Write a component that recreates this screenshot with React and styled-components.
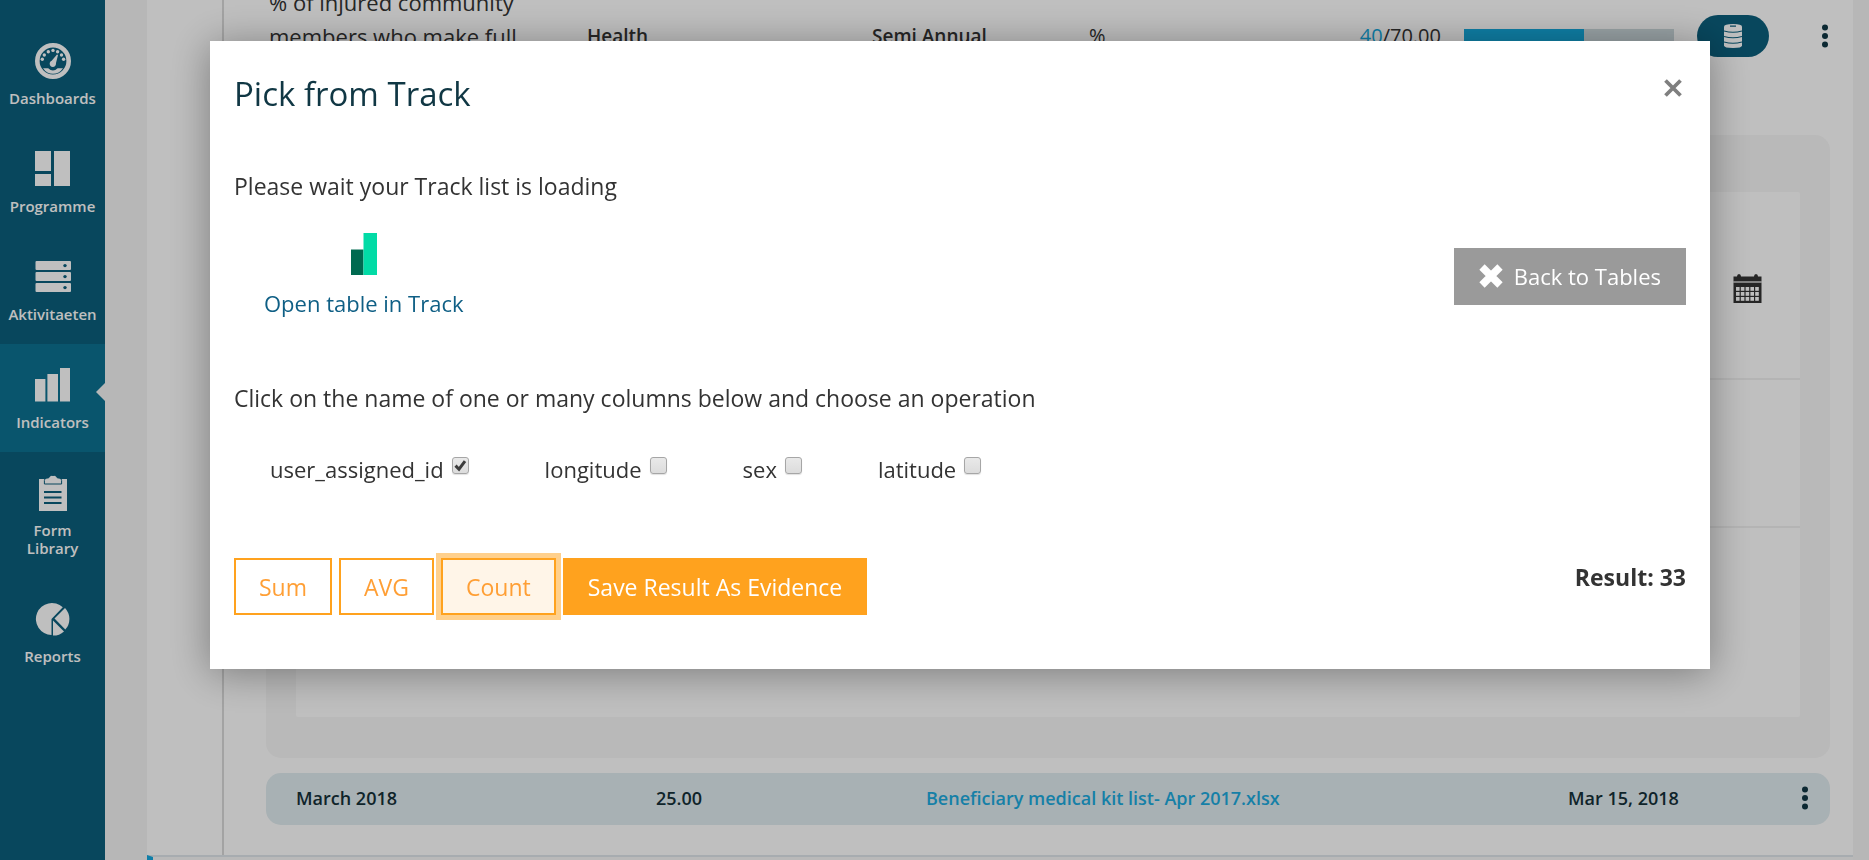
import React, { useState } from 'react';
import styled, { createGlobalStyle, css } from 'styled-components';

const GlobalStyle = createGlobalStyle`
  *, *::before, *::after { box-sizing: border-box; }
  body {
    margin: 0;
    background: #f4f4f4;
    color: #333;
    font-family: "Segoe UI", "Open Sans", "Noto Sans", sans-serif;
    font-size: 23px;
    line-height: 32px;
  }
  button { font: inherit; cursor: pointer; }
  a { text-decoration: none; }
  svg { display: block; }
`;

/* ---------- page ---------- */

const Page = styled.div`
  display: flex;
  min-height: 100vh;
`;

const Sidebar = styled.nav`
  flex: none;
  width: 105px;
  background: #0b5f7d;
  padding-top: 20px;
`;

const NavItem = styled.a`
  position: relative;
  display: flex;
  flex-direction: column;
  align-items: center;
  gap: 10px;
  padding: 23px 0 21px;
  color: #fff;
  font-size: 15px;
  font-weight: 600;
  line-height: 18px;
  text-align: center;

  ${({ $active }) =>
    $active &&
    css`
      background: #0d7292;
      &::after {
        content: '';
        position: absolute;
        right: 0;
        top: 39px;
        border: 9px solid transparent;
        border-left: 0;
        border-right-color: #f4f4f4;
      }
    `}
`;

const NavLabel = styled.span`
  max-width: 96px;
  white-space: pre-line;
`;

const Content = styled.main`
  flex: 1;
  min-width: 0;
  display: flex;
  flex-direction: column;
  padding: 0 16px 0 42px;
`;

const IndicatorBlock = styled.section`
  display: flex;
  background: #fff;
`;

const Rail = styled.div`
  flex: none;
  width: 77px;
  border-right: 2px solid #dadada;
`;

const IndicatorBody = styled.div`
  flex: 1;
  min-width: 0;
  padding: 0 23px 30px 42px;
`;

const IndicatorRow = styled.div`
  display: grid;
  grid-template-columns: 318fr 285fr 217fr 100fr 252fr 256px 100px 56px;
  align-items: center;
  align-content: center;
  height: 72px;
  margin: 0 -23px 0 3px;
  overflow: hidden;
  font-size: 20px;
`;

const Description = styled.div`
  max-width: 270px;
  padding-bottom: 34px;
  font-size: 22px;
  line-height: 34px;
`;

const Strong = styled.div`
  font-size: 19px;
  font-weight: 600;
`;

const Value = styled.div`
  text-align: right;

  span { color: #14a9e0; }
`;

const ProgressTrack = styled.div`
  height: 14px;
  margin: 0 23px;
  background: #ccd9dd;
`;

const ProgressFill = styled.div`
  height: 100%;
  background: #14a9dc;
`;

const PillButton = styled.button`
  display: flex;
  align-items: center;
  justify-content: center;
  width: 72px;
  height: 42px;
  padding: 0;
  border: 0;
  border-radius: 21px;
  background: #0b5f7d;
  color: #fff;
`;

const MenuButton = styled.button`
  display: flex;
  justify-content: center;
  width: 20px;
  padding: 0;
  border: 0;
  background: none;
  color: #103744;
`;

const MenuCell = styled.div`
  display: flex;
  justify-content: center;
`;

const PeriodPanel = styled.div`
  margin-top: 63px;
  padding: 57px 30px 41px;
  border-radius: 15px;
  background: #f7f7f7;
`;

const PeriodForm = styled.div`
  border-radius: 2px;
  background: #fff;
`;

const FormSection = styled.div`
  display: flex;
  align-items: center;
  justify-content: flex-end;
  height: ${({ $height }) => $height}px;
  padding: 6px 38px 0;

  & + & { border-top: 2px solid #f1f1f1; }
`;

const PlainButton = styled.button`
  padding: 0;
  border: 0;
  background: none;
  color: ${({ $color }) => $color};
`;

const PeriodRow = styled.div`
  display: grid;
  grid-template-columns: 360fr 270fr 642fr 227fr 20px;
  align-items: center;
  height: 52px;
  margin-top: 15px;
  padding: 0 15px 2px 30px;
  border-radius: 15px;
  background: #e1ecf0;
  color: #153139;
  font-size: 18px;
  font-weight: 600;
`;

const FileLink = styled.a`
  color: #1cabdf;
`;

const NextBlock = styled.section`
  flex: 1;
  min-height: 5px;
  border-top: 2px solid #dfe6eb;
  border-left: 6px solid #14a9e0;
  background: #f7f7f7;
`;

/* ---------- dialog ---------- */

const Overlay = styled.div`
  position: fixed;
  inset: 0;
  padding: 41px 159px 0 210px;
  background: rgba(0, 0, 0, 0.25);
`;

const Dialog = styled.div`
  padding: 31px 24px 54px;
  background: #fff;
  box-shadow: 0 4px 38px rgba(0, 0, 0, 0.36);
`;

const DialogHeader = styled.header`
  display: flex;
  align-items: flex-start;
  justify-content: space-between;
`;

const Title = styled.h2`
  margin: 0;
  color: #103744;
  font-size: 33px;
  font-weight: 400;
  line-height: 44px;
`;

const CloseButton = styled.button`
  margin: 6px 3px 0 0;
  padding: 0;
  border: 0;
  background: none;
  color: #7f7f7f;
`;

const Text = styled.p`
  margin: ${({ $top }) => $top}px 0 0;
`;

const TableRow = styled.div`
  display: flex;
  align-items: center;
  justify-content: space-between;
  margin-top: 31px;
  font-size: 22px;
`;

const TrackLink = styled.a`
  display: flex;
  flex-direction: column;
  align-items: center;
  gap: 12px;
  padding-left: 30px;
  color: #0f5f85;
`;

const Columns = styled.div`
  display: flex;
  flex-wrap: wrap;
  gap: 12px 76px;
  margin-top: 39px;
  padding-left: 36px;
  font-size: 22px;
`;

const ColumnOption = styled.label`
  display: flex;
  gap: 8px;
`;

const CheckWrap = styled.span`
  display: grid;
  width: 17px;
  height: 17px;
  margin-top: 4px;

  & > * { grid-area: 1 / 1; }
`;

const Checkbox = styled.input`
  appearance: none;
  width: 17px;
  height: 17px;
  margin: 0;
  border: 1px solid #a6a6a6;
  border-radius: 3px;
  background: linear-gradient(#e9e9e9, #dcdcdc);
  box-shadow: 0 1px 1px rgba(0, 0, 0, 0.12);
`;

const Actions = styled.div`
  display: flex;
  align-items: flex-start;
  gap: 7px;
  margin-top: 73px;
`;

const Button = styled.button`
  display: flex;
  align-items: center;
  gap: 11px;
  height: 57px;
  padding: 0 23px;
  border: 2px solid #ffa21e;
  background: #fff;
  color: #ff9f35;

  ${({ $kind }) =>
    $kind === 'selected' &&
    css`
      background: #fff5e8;
      box-shadow: 0 0 0 5px #ffd08c;
    `}
  ${({ $kind }) =>
    $kind === 'primary' &&
    css`
      background: #ffa21e;
      color: #fff;
    `}
  ${({ $kind }) =>
    $kind === 'muted' &&
    css`
      border-color: #9a9a9a;
      background: #9a9a9a;
      color: #fff;
    `}
`;

const Result = styled.strong`
  margin-left: auto;
  line-height: 38px;
`;

/* ---------- icons ---------- */

const NavIcon = ({ children }) => (
  <svg width="36" height="36" viewBox="0 0 36 36" fill="currentColor" aria-hidden="true">
    {children}
  </svg>
);

const GaugeIcon = () => (
  <NavIcon>
    <circle cx="18" cy="18" r="15.7" fill="none" stroke="currentColor" strokeWidth="4.6" />
    {[[7.3, 16.3], [9.3, 12], [13.3, 8.8], [18, 7.4], [22.6, 8.8], [26.5, 12], [28.6, 16.3]].map(([x, y]) => (
      <circle key={x} cx={x} cy={y} r="1.7" />
    ))}
    <circle cx="17.8" cy="20.8" r="3.1" />
    <path d="M15.6 19 22 11.6 23 12 20.6 21.6Z" />
    <path d="M8 25.2h5.2q4.8 4.4 9.4 0H28q-3.8 5.6-10 5.6T8 25.2Z" />
  </NavIcon>
);

const BoardIcon = () => (
  <NavIcon>
    <path d="M0 0h16v20H0zM0 23h16v12H0zM19 0h16v35H19z" />
  </NavIcon>
);

const ServerIcon = () => (
  <NavIcon>
    {[2, 13, 24].map((y) => (
      <React.Fragment key={y}>
        <rect x="0.5" y={y} width="35.5" height="9" rx="1" />
        <circle cx="30" cy={y + 4.6} r="1.7" fill="#0b5f7d" />
      </React.Fragment>
    ))}
  </NavIcon>
);

const BarsIcon = () => (
  <NavIcon>
    <path d="M0 12h10.4v22.6H0zM12.4 7H23v27.6H12.4zM25 1h10v33.6H25z" />
  </NavIcon>
);

const ClipboardIcon = () => (
  <NavIcon>
    <path d="M4 4h28v32H4z" />
    <path
      d="M9.4 9V5.5Q9.4 3 12 3h1.5Q14.5.4 16.5.4h3Q21.5.4 22.5 3H24q2.6 0 2.6 2.5V9Z"
      stroke="#0b5f7d"
      strokeWidth="1"
    />
    <path d="M9 17h17.5M9 22.5h17.5M9 28h17.5" stroke="#0b5f7d" strokeWidth="2.2" />
  </NavIcon>
);

const PieIcon = () => (
  <NavIcon>
    <path d="M16.5 18V34A16 16 0 1 1 27.8 6.3Z" />
    <path d="M19.5 17.6 30 6.900A16 16 0 0 1 30.3 28.6Z" />
    <path d="M18 19.4 29 30.4A16 16 0 0 1 18 34.6Z" />
  </NavIcon>
);

const DotsIcon = () => (
  <svg width="6" height="24" viewBox="0 0 6 24" fill="currentColor" aria-hidden="true">
    <circle cx="3" cy="3.5" r="3" />
    <circle cx="3" cy="12" r="3" />
    <circle cx="3" cy="20.5" r="3" />
  </svg>
);

const DatabaseIcon = () => (
  <svg width="18" height="24" viewBox="0 0 18 24" aria-hidden="true">
    <path d="M0 2.5Q0 0 9 0t9 2.5V21.5Q18 24 9 24T0 21.5Z" fill="currentColor" />
    <path
      d="M0 7Q9 9.5 18 7M0 12.5Q9 15 18 12.5M0 18Q9 20.5 18 18M6 2.2h6"
      fill="none"
      stroke="#0b5f7d"
      strokeWidth="1.2"
    />
  </svg>
);

const CalendarIcon = () => (
  <svg width="29" height="29" viewBox="0 0 29 29" aria-hidden="true">
    <path d="M.5 3.5V2.5H4Q4 0 6 0t2 2.5H21Q21 0 23 0t2 2.5H28.5V29H.5Z" fill="currentColor" />
    <path d="M0 8h29" stroke="#d6d6d6" strokeWidth="1.5" />
    {[13, 18, 23].map((y) =>
      [3, 7.8, 12.6, 17.4, 22.2].map((x) => (
        <rect key={`${x}-${y}`} x={x} y={y} width="3.6" height="3.8" fill="#fff" />
      ))
    )}
  </svg>
);

const CrossIcon = ({ size, weight }) => (
  <svg width={size} height={size} viewBox="0 0 16 16" aria-hidden="true">
    <path d="M2 2 14 14M14 2 2 14" stroke="currentColor" strokeWidth={weight} />
  </svg>
);

const TrackLogo = () => (
  <svg width="26" height="42" viewBox="0 0 26 42" aria-hidden="true">
    <path d="M0 16.5h12.5V42H0z" fill="#006a50" />
    <path d="M12.5 0H26v42H12.5z" fill="#02dba6" />
  </svg>
);

const Tick = () => (
  <svg width="17" height="17" viewBox="0 0 17 17" aria-hidden="true" pointerEvents="none">
    <path d="M3.5 8.6 7 12.2 13 4.2" fill="none" stroke="#3c3c3c" strokeWidth="3" />
  </svg>
);

/* ---------- data ---------- */

const NAV = [
  { label: 'Dashboards', Icon: GaugeIcon },
  { label: 'Programme', Icon: BoardIcon },
  { label: 'Aktivitaeten', Icon: ServerIcon },
  { label: 'Indicators', Icon: BarsIcon, active: true },
  { label: 'Form\nLibrary', Icon: ClipboardIcon },
  { label: 'Reports', Icon: PieIcon },
];

const COLUMNS = ['user_assigned_id', 'longitude', 'sex', 'latitude'];
const OPERATIONS = ['Sum', 'AVG', 'Count'];

function PickDialog() {
  const [checked, setChecked] = useState(['user_assigned_id']);
  const [operation, setOperation] = useState('Count');

  const toggle = (name) =>
    setChecked((list) => (list.includes(name) ? list.filter((n) => n !== name) : [...list, name]));

  return (
    <Overlay>
      <Dialog role="dialog" aria-modal="true" aria-labelledby="dialog-title">
        <DialogHeader>
          <Title id="dialog-title">Pick from Track</Title>
          <CloseButton type="button" aria-label="Close">
            <CrossIcon size={20} weight={3} />
          </CloseButton>
        </DialogHeader>

        <Text $top={54}>Please wait your Track list is loading</Text>

        <TableRow>
          <TrackLink href="#track">
            <TrackLogo />
            Open table in Track
          </TrackLink>
          <Button type="button" $kind="muted">
            <CrossIcon size={24} weight={5} />
            Back to Tables
          </Button>
        </TableRow>

        <Text $top={63}>Click on the name of one or many columns below and choose an operation</Text>

        <Columns>
          {COLUMNS.map((name) => (
            <ColumnOption key={name} htmlFor={`column-${name}`}>
              {name}
              <CheckWrap>
                <Checkbox
                  id={`column-${name}`}
                  type="checkbox"
                  checked={checked.includes(name)}
                  onChange={() => toggle(name)}
                />
                {checked.includes(name) && <Tick />}
              </CheckWrap>
            </ColumnOption>
          ))}
        </Columns>

        <Actions>
          {OPERATIONS.map((name) => (
            <Button
              key={name}
              type="button"
              $kind={name === operation ? 'selected' : 'outline'}
              onClick={() => setOperation(name)}
            >
              {name}
            </Button>
          ))}
          <Button type="button" $kind="primary">Save Result As Evidence</Button>
          <Result>Result: 33</Result>
        </Actions>
      </Dialog>
    </Overlay>
  );
}

export default function App() {
  return (
    <>
      <GlobalStyle />
      <Page>
        <Sidebar>
          {NAV.map(({ label, Icon, active }) => (
            <NavItem key={label} href="#nav" $active={active}>
              <Icon />
              <NavLabel>{label}</NavLabel>
            </NavItem>
          ))}
        </Sidebar>

        <Content>
          <IndicatorBlock>
            <Rail />
            <IndicatorBody>
              <IndicatorRow>
                <Description>% of injured community members who make full</Description>
                <Strong>Health</Strong>
                <Strong>Semi Annual</Strong>
                <div>%</div>
                <Value><span>40</span>/70.00</Value>
                <ProgressTrack>
                  <ProgressFill style={{ width: `${(40 / 70) * 100}%` }} />
                </ProgressTrack>
                <PillButton type="button" aria-label="Data source"><DatabaseIcon /></PillButton>
                <MenuCell>
                  <MenuButton type="button" aria-label="Indicator menu"><DotsIcon /></MenuButton>
                </MenuCell>
              </IndicatorRow>

              <PeriodPanel>
                <PeriodForm>
                  <FormSection $height={186}>
                    <PlainButton type="button" aria-label="Choose date" $color="#333">
                      <CalendarIcon />
                    </PlainButton>
                  </FormSection>
                  <FormSection $height={148} />
                  <FormSection $height={191} />
                </PeriodForm>
              </PeriodPanel>

              <PeriodRow>
                <div>March 2018</div>
                <div>25.00</div>
                <FileLink href="#file">Beneficiary medical kit list- Apr 2017.xlsx</FileLink>
                <div>Mar 15, 2018</div>
                <MenuButton type="button" aria-label="Period menu"><DotsIcon /></MenuButton>
              </PeriodRow>
            </IndicatorBody>
          </IndicatorBlock>
          <NextBlock />
        </Content>
      </Page>
      <PickDialog />
    </>
  );
}
